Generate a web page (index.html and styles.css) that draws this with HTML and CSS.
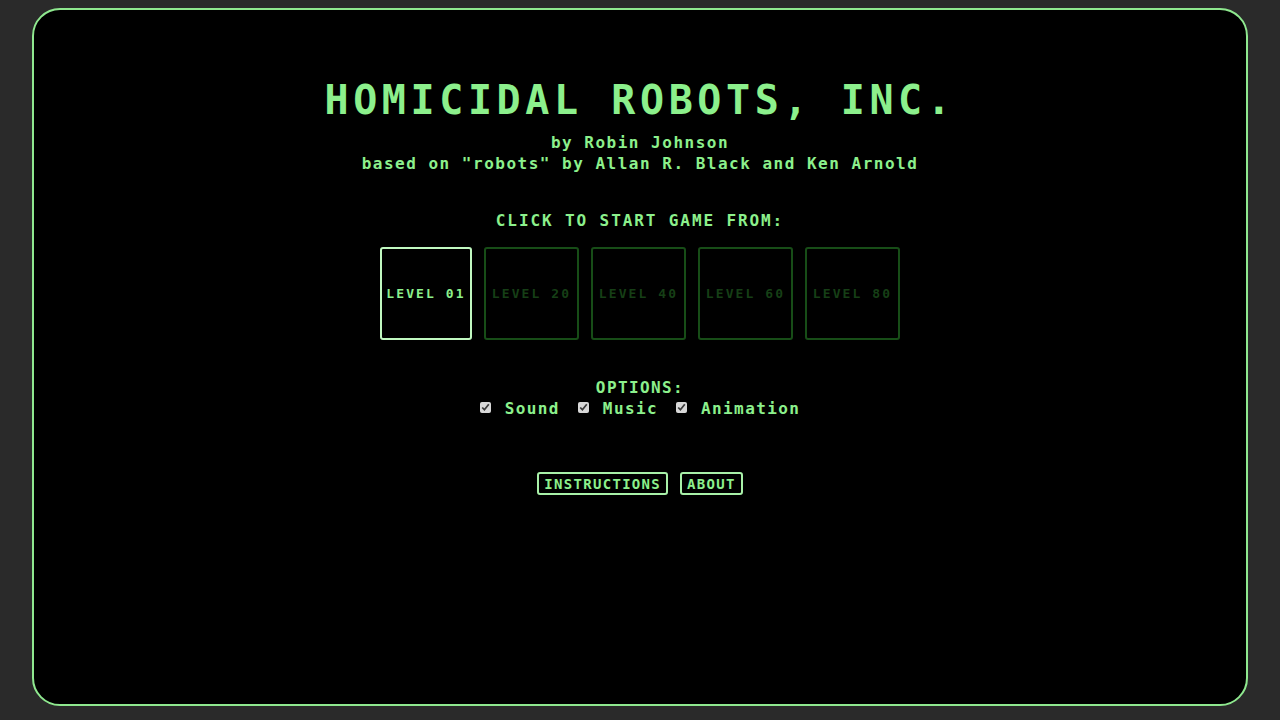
FILE: index.html
```
<!DOCTYPE html>
<html>
<head>
<meta charset="utf-8">
<link rel="stylesheet" href="styles.css">
</head>
<body>
<div class="frame">
  <h1 class="title">HOMICIDAL ROBOTS, INC.</h1>
  <div class="credits">
    <div>by Robin Johnson</div>
    <div>based on "robots" by Allan R. Black and Ken Arnold</div>
  </div>
  <div class="start-label">CLICK TO START GAME FROM:</div>
  <div class="levels">
    <div class="level active">LEVEL 01</div>
    <div class="level">LEVEL 20</div>
    <div class="level">LEVEL 40</div>
    <div class="level">LEVEL 60</div>
    <div class="level">LEVEL 80</div>
  </div>
  <div class="options">
    <div class="options-label">OPTIONS:</div>
    <div class="option-row">
      <label class="opt"><input type="checkbox" checked> Sound</label>
      <label class="opt"><input type="checkbox" checked> Music</label>
      <label class="opt"><input type="checkbox" checked> Animation</label>
    </div>
  </div>
  <div class="buttons">
    <button class="btn">INSTRUCTIONS</button>
    <button class="btn">ABOUT</button>
  </div>
</div>
</body>
</html>
```
FILE: styles.css
```
html, body {
  margin: 0;
  padding: 0;
  background: #2a2a2a;
}
body {
  padding: 8px 32px 14px 32px;
  font-family: "DejaVu Sans Mono", "Liberation Mono", monospace;
  color: #8cf08c;
}
.frame {
  box-sizing: border-box;
  height: 698px;
  background: #000;
  border: 2px solid #8fe88f;
  border-radius: 28px;
  display: flex;
  flex-direction: column;
  align-items: center;
  padding-top: 70px;
}
.title {
  margin: 0;
  font-size: 40px;
  line-height: 40px;
  font-weight: bold;
  letter-spacing: 4.6px;
  color: #8cf08c;
}
.credits {
  margin-top: 12px;
  text-align: center;
  font-size: 16px;
  line-height: 21px;
  font-weight: bold;
  letter-spacing: 1.5px;
}
.start-label {
  margin-top: 37px;
  font-size: 16px;
  line-height: 20px;
  font-weight: bold;
  letter-spacing: 1.9px;
}
.levels {
  margin-top: 16px;
  display: flex;
  gap: 12px;
}
.level {
  box-sizing: border-box;
  width: 95px;
  height: 93px;
  border: 2px solid #174d17;
  border-radius: 3px;
  display: flex;
  align-items: center;
  justify-content: center;
  font-size: 13px;
  font-weight: bold;
  letter-spacing: 2.1px;
  color: #163f16;
}
.level.active {
  width: 92px;
  border-color: #c0f8c0;
  color: #8cf08c;
}
.options {
  margin-top: 37px;
  display: flex;
  flex-direction: column;
  align-items: center;
  font-size: 16px;
  font-weight: bold;
  letter-spacing: 1.4px;
}
.options-label {
  line-height: 21px;
}
.option-row {
  display: flex;
  gap: 18px;
  line-height: 21px;
}
.opt {
  display: flex;
  align-items: center;
  gap: 14px;
}
.opt input {
  margin: 0;
  width: 11px;
  height: 11px;
  accent-color: #d8d8d8;
  position: relative;
  top: -1px;
}
.buttons {
  margin-top: 53px;
  display: flex;
  gap: 12px;
}
.btn {
  box-sizing: border-box;
  height: 23px;
  padding: 0 5px;
  background: #000;
  border: 2px solid #a8f0a8;
  border-radius: 3px;
  color: #8cf08c;
  font-family: "DejaVu Sans Mono", "Liberation Mono", monospace;
  font-size: 14px;
  font-weight: bold;
  letter-spacing: 1.3px;
}
```
